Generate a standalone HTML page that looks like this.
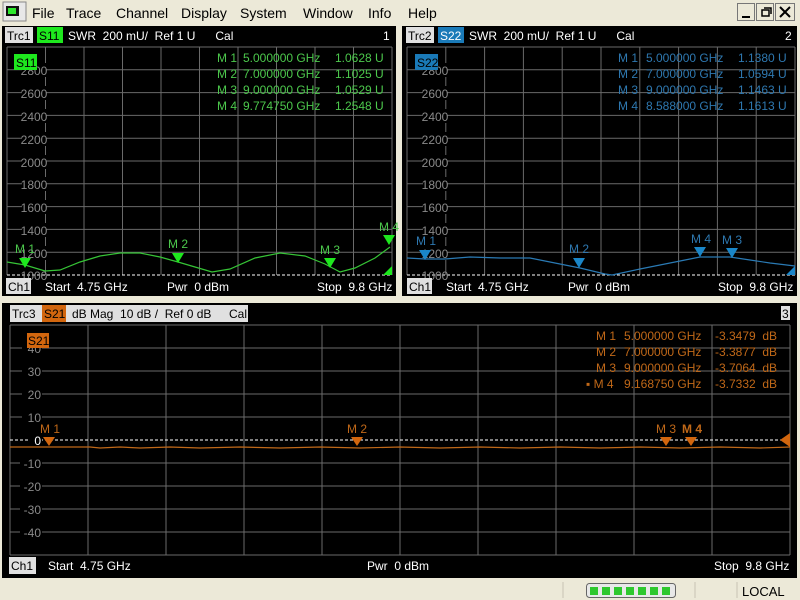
<!DOCTYPE html>
<html><head><meta charset="utf-8"><style>
html,body{margin:0;padding:0;width:800px;height:600px;overflow:hidden;background:#ece9d8;font-family:"Liberation Sans",sans-serif}
svg{display:block}
text{font-family:"Liberation Sans",sans-serif;white-space:pre}
</style></head><body>
<svg width="800" height="600" viewBox="0 0 800 600" xmlns="http://www.w3.org/2000/svg" xml:space="preserve">
<rect x="0" y="0" width="800" height="25" fill="#ece9d8"/>
<rect x="3" y="2" width="23" height="19" fill="#e8e8e8" stroke="#888"/>
<rect x="6" y="6" width="13" height="10" fill="#111"/>
<rect x="8" y="8" width="8" height="6" fill="#2ee82e"/>
<g font-size="14" fill="#000">
<text x="32" y="18">File</text><text x="66" y="18">Trace</text><text x="116" y="18">Channel</text>
<text x="181" y="18">Display</text><text x="240" y="18">System</text><text x="303" y="18">Window</text>
<text x="368" y="18">Info</text><text x="408" y="18">Help</text>
</g>
<g fill="#ece9d8" stroke="#777">
<rect x="737.5" y="3.5" width="17" height="17"/><rect x="756.5" y="3.5" width="17" height="17"/><rect x="775.5" y="3.5" width="19" height="17"/>
</g>
<path d="M742 17h8" stroke="#000" stroke-width="2"/>
<path d="M762 10h7v6h-7zM764 8h7v6" fill="none" stroke="#000" stroke-width="1.5"/>
<path d="M780 7l10 10M790 7l-10 10" stroke="#000" stroke-width="2"/>

<rect x="2" y="26" width="394" height="270" fill="#000"/>
<path d="M7 47V275M45.5 47V275M84 47V275M122.5 47V275M161 47V275M199.5 47V275M238 47V275M276.5 47V275M315 47V275M353.5 47V275M392 47V275M7 47H392M7 69.8H392M7 92.6H392M7 115.4H392M7 138.2H392M7 161H392M7 183.8H392M7 206.6H392M7 229.4H392M7 252.2H392" stroke="#6a6a6a" fill="none"/>
<path d="M7 275H392" stroke="#fff" stroke-dasharray="3 2"/>
<g font-size="12" fill="#8a8a8a" text-anchor="middle">
<rect x="22" y="63" width="24" height="14" fill="#000"/><text x="34" y="75">2800</text>
<rect x="22" y="86" width="24" height="14" fill="#000"/><text x="34" y="98">2600</text>
<rect x="22" y="109" width="24" height="14" fill="#000"/><text x="34" y="121">2400</text>
<rect x="22" y="132" width="24" height="14" fill="#000"/><text x="34" y="144">2200</text>
<rect x="22" y="155" width="24" height="14" fill="#000"/><text x="34" y="167">2000</text>
<rect x="22" y="177" width="24" height="14" fill="#000"/><text x="34" y="189">1800</text>
<rect x="22" y="200" width="24" height="14" fill="#000"/><text x="34" y="212">1600</text>
<rect x="22" y="223" width="24" height="14" fill="#000"/><text x="34" y="235">1400</text>
<rect x="22" y="246" width="24" height="14" fill="#000"/><text x="34" y="258">1200</text>
<text x="34" y="280">1000</text>
</g>
<rect x="5" y="27" width="28" height="16" fill="#e0e0e0"/>
<rect x="37" y="27" width="26" height="16" fill="#1ee81e"/>
<g font-size="12">
<text x="7" y="40" fill="#000">Trc1</text><text x="39" y="40" fill="#000">S11</text>
<text x="68" y="40" fill="#fff">SWR  200 mU/  Ref 1 U      Cal</text>
<text x="383" y="40" fill="#fff">1</text>
</g>
<rect x="14" y="54" width="23" height="16" fill="#1ee81e"/>
<text x="16" y="67" font-size="12" fill="#000">S11</text>
<g font-size="12" fill="#4cc84c">
<text x="217" y="62">M 1</text><text x="243" y="62">5.000000 GHz</text><text x="335" y="62">1.0628 U</text>
<text x="217" y="78">M 2</text><text x="243" y="78">7.000000 GHz</text><text x="335" y="78">1.1025 U</text>
<text x="217" y="94">M 3</text><text x="243" y="94">9.000000 GHz</text><text x="335" y="94">1.0529 U</text>
<text x="217" y="110">M 4</text><text x="243" y="110">9.774750 GHz</text><text x="335" y="110">1.2548 U</text>
</g>
<path d="M7 262L25 265L45 271L60 270L80 262L100 256L120 253L140 253L160 257L178 262L195 267L212 272L230 269L255 258L280 253L305 256L325 264L340 272L355 268L375 258L390 247" fill="none" stroke="#36c436" stroke-width="1.2"/>
<g fill="#1ee81e">
<path d="M19 258h12l-6 10z"/><path d="M172 253h12l-6 10z"/><path d="M324 258h12l-6 10z"/><path d="M383 235h12l-6 10z"/><path d="M392 266v9h-9z"/>
</g>
<g font-size="12" fill="#4cc84c">
<text x="15" y="253">M 1</text><text x="168" y="248">M 2</text><text x="320" y="254">M 3</text><text x="379" y="231">M 4</text>
</g>
<rect x="6" y="278" width="25" height="16" fill="#e0e0e0"/>
<g font-size="12"><text x="8" y="291" fill="#000">Ch1</text>
<text x="45" y="291" fill="#fff">Start  4.75 GHz</text><text x="167" y="291" fill="#fff">Pwr  0 dBm</text><text x="317" y="291" fill="#fff">Stop  9.8 GHz</text></g>

<rect x="402" y="26" width="395" height="270" fill="#000"/>
<path d="M407 47V275M445.8 47V275M484.6 47V275M523.4 47V275M562.2 47V275M601 47V275M639.8 47V275M678.6 47V275M717.4 47V275M756.2 47V275M795 47V275M407 47H795M407 69.8H795M407 92.6H795M407 115.4H795M407 138.2H795M407 161H795M407 183.8H795M407 206.6H795M407 229.4H795M407 252.2H795" stroke="#6a6a6a" fill="none"/>
<path d="M407 275H795" stroke="#fff" stroke-dasharray="3 2"/>
<g font-size="12" fill="#8a8a8a" text-anchor="middle">
<rect x="423" y="63" width="24" height="14" fill="#000"/><text x="435" y="75">2800</text>
<rect x="423" y="86" width="24" height="14" fill="#000"/><text x="435" y="98">2600</text>
<rect x="423" y="109" width="24" height="14" fill="#000"/><text x="435" y="121">2400</text>
<rect x="423" y="132" width="24" height="14" fill="#000"/><text x="435" y="144">2200</text>
<rect x="423" y="155" width="24" height="14" fill="#000"/><text x="435" y="167">2000</text>
<rect x="423" y="177" width="24" height="14" fill="#000"/><text x="435" y="189">1800</text>
<rect x="423" y="200" width="24" height="14" fill="#000"/><text x="435" y="212">1600</text>
<rect x="423" y="223" width="24" height="14" fill="#000"/><text x="435" y="235">1400</text>
<rect x="423" y="246" width="24" height="14" fill="#000"/><text x="435" y="258">1200</text>
<text x="435" y="280">1000</text>
</g>
<rect x="406" y="27" width="28" height="16" fill="#e0e0e0"/>
<rect x="438" y="27" width="26" height="16" fill="#1a7ab8"/>
<g font-size="12">
<text x="408" y="40" fill="#000">Trc2</text><text x="440" y="40" fill="#fff">S22</text>
<text x="469" y="40" fill="#fff">SWR  200 mU/  Ref 1 U      Cal</text>
<text x="785" y="40" fill="#fff">2</text>
</g>
<rect x="415" y="54" width="23" height="16" fill="#1a7ab8"/>
<text x="417" y="67" font-size="12" fill="#000">S22</text>
<g font-size="12" fill="#2e78b0">
<text x="618" y="62">M 1</text><text x="646" y="62">5.000000 GHz</text><text x="738" y="62">1.1380 U</text>
<text x="618" y="78">M 2</text><text x="646" y="78">7.000000 GHz</text><text x="738" y="78">1.0594 U</text>
<text x="618" y="94">M 3</text><text x="646" y="94">9.000000 GHz</text><text x="738" y="94">1.1463 U</text>
<text x="618" y="110">M 4</text><text x="646" y="110">8.588000 GHz</text><text x="738" y="110">1.1613 U</text>
</g>
<path d="M407 258L425 259L445 259L470 257L500 258L530 258L560 264L580 268L605 274L612 275L640 269L670 263L700 257L730 257L750 260L770 263L795 266" fill="none" stroke="#2a7ab4" stroke-width="1.2"/>
<g fill="#1a86c8">
<path d="M419 250h12l-6 10z"/><path d="M573 258h12l-6 10z"/><path d="M694 247h12l-6 10z"/><path d="M726 248h12l-6 10z"/><path d="M795 266v9h-9z"/>
</g>
<g font-size="12" fill="#2e78b0">
<text x="416" y="245">M 1</text><text x="569" y="253">M 2</text><text x="691" y="243">M 4</text><text x="722" y="244">M 3</text>
</g>
<rect x="407" y="278" width="25" height="16" fill="#e0e0e0"/>
<g font-size="12"><text x="409" y="291" fill="#000">Ch1</text>
<text x="446" y="291" fill="#fff">Start  4.75 GHz</text><text x="568" y="291" fill="#fff">Pwr  0 dBm</text><text x="718" y="291" fill="#fff">Stop  9.8 GHz</text></g>

<rect x="2" y="303" width="795" height="275" fill="#000"/>
<path d="M10 325V555M88 325V555M166 325V555M244 325V555M322 325V555M400 325V555M478 325V555M556 325V555M634 325V555M712 325V555M790 325V555M10 325H790M10 348H790M10 371H790M10 394H790M10 417H790M10 463H790M10 486H790M10 509H790M10 532H790M10 555H790" stroke="#6a6a6a" fill="none"/>
<path d="M10 440H790" stroke="#fff" stroke-dasharray="3 2"/>
<g font-size="12" fill="#8a8a8a" text-anchor="end">
<rect x="22" y="341" width="20" height="14" fill="#000"/><text x="41" y="353">40</text>
<rect x="22" y="364" width="20" height="14" fill="#000"/><text x="41" y="376">30</text>
<rect x="22" y="387" width="20" height="14" fill="#000"/><text x="41" y="399">20</text>
<rect x="22" y="410" width="20" height="14" fill="#000"/><text x="41" y="422">10</text>
<rect x="30" y="433" width="12" height="14" fill="#000"/><text x="41" y="445" fill="#fff">0</text>
<rect x="20" y="456" width="22" height="14" fill="#000"/><text x="41" y="468">-10</text>
<rect x="20" y="479" width="22" height="14" fill="#000"/><text x="41" y="491">-20</text>
<rect x="20" y="502" width="22" height="14" fill="#000"/><text x="41" y="514">-30</text>
<rect x="20" y="525" width="22" height="14" fill="#000"/><text x="41" y="537">-40</text>
</g>
<rect x="10" y="305" width="238" height="17" fill="#e0e0e0"/>
<rect x="42" y="305" width="24" height="17" fill="#d2660e"/>
<g font-size="12" fill="#000">
<text x="12" y="318">Trc3</text><text x="44" y="318">S21</text>
<text x="72" y="318">dB Mag  10 dB /  Ref 0 dB</text><text x="229" y="318">Cal</text>
</g>
<rect x="781" y="306" width="9" height="14" fill="#e0e0e0"/><text x="782" y="318" font-size="12" fill="#000">3</text>
<rect x="27" y="333" width="22" height="15" fill="#d2660e"/>
<text x="28" y="345" font-size="12" fill="#000">S21</text>
<g font-size="12" fill="#c06818">
<text x="596" y="340">M 1</text><text x="624" y="340">5.000000 GHz</text><text x="715" y="340">-3.3479  dB</text>
<text x="596" y="356">M 2</text><text x="624" y="356">7.000000 GHz</text><text x="715" y="356">-3.3877  dB</text>
<text x="596" y="372">M 3</text><text x="624" y="372">9.000000 GHz</text><text x="715" y="372">-3.7064  dB</text>
<text x="586" y="388">▪ M 4</text><text x="624" y="388">9.168750 GHz</text><text x="715" y="388">-3.7332  dB</text>
</g>
<path d="M10 447H90L100 448L120 447L140 448L170 447L200 448L240 447L280 448L320 447L360 448L400 447L440 448L480 447L520 448L560 447L600 448L640 447L680 448L720 447L760 448L790 447" fill="none" stroke="#c06818" stroke-width="1.2"/>
<g fill="#d2660e">
<path d="M43 437h12l-6 9z"/><path d="M351 437h12l-6 9z"/><path d="M660 437h12l-6 9z"/><path d="M685 437h12l-6 9z"/><path d="M790 433v14l-10 -7z"/>
</g>
<g font-size="12" fill="#c06818">
<text x="40" y="433">M 1</text><text x="347" y="433">M 2</text><text x="656" y="433">M 3</text><text x="682" y="433" font-weight="bold">M 4</text>
</g>
<rect x="9" y="557" width="27" height="17" fill="#e0e0e0"/>
<g font-size="12"><text x="11" y="570" fill="#000">Ch1</text>
<text x="48" y="570" fill="#fff">Start  4.75 GHz</text><text x="367" y="570" fill="#fff">Pwr  0 dBm</text><text x="714" y="570" fill="#fff">Stop  9.8 GHz</text></g>

<rect x="0" y="579" width="800" height="21" fill="#ece9d8"/>
<path d="M563 582V598M695 582V598M737 582V598" stroke="#c8c4b4"/>
<rect x="586.5" y="583.5" width="89" height="14" rx="3" fill="#e8e8e8" stroke="#666"/>
<g fill="#2ec82e">
<rect x="590" y="587" width="8" height="8"/><rect x="602" y="587" width="8" height="8"/><rect x="614" y="587" width="8" height="8"/><rect x="626" y="587" width="8" height="8"/><rect x="638" y="587" width="8" height="8"/><rect x="650" y="587" width="8" height="8"/><rect x="662" y="587" width="8" height="8"/>
</g>
<text x="742" y="596" font-size="13" fill="#000">LOCAL</text>
</svg>
</body></html>
